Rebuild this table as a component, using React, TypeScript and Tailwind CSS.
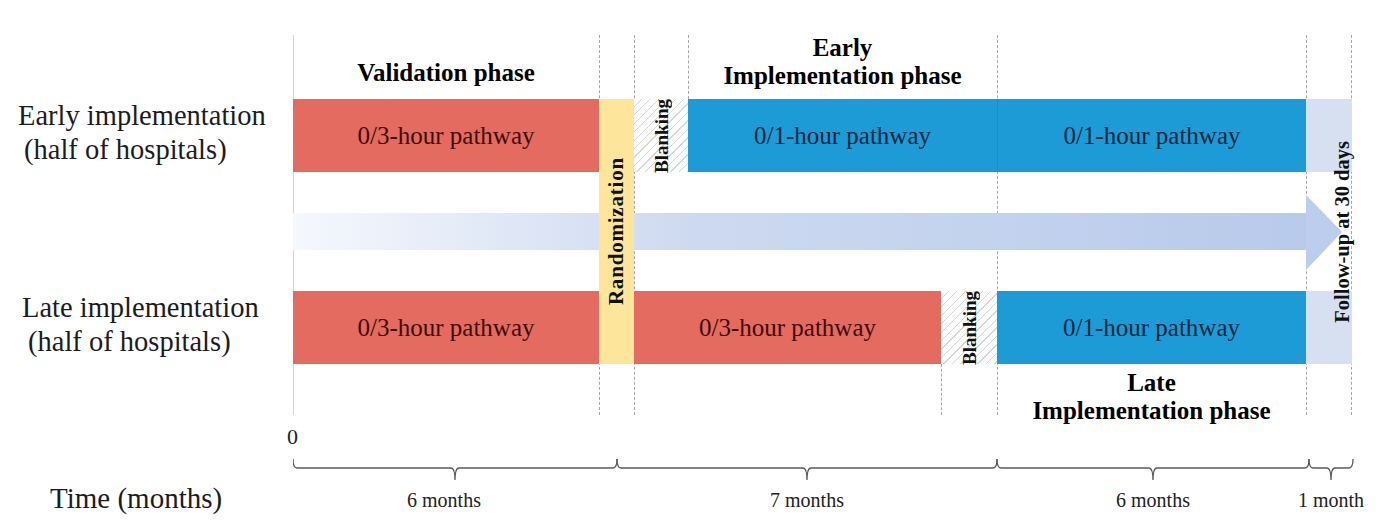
import React from "react";

// Timeline of the stepped-wedge study: two hospital groups, four periods.
const dashed = "border-dashed border-[#a3a8ae]";
const hatch =
  "bg-[repeating-linear-gradient(135deg,#ffffff_0px,#ffffff_5px,#d5d5d5_5px,#d5d5d5_6px)]";
const upright = "[writing-mode:vertical-rl] rotate-180 whitespace-nowrap";

const Bar = ({ className, tone, label }: { className: string; tone: "red" | "blue"; label: string }) => (
  <div
    className={`${className} flex items-center justify-center text-[25px] leading-none whitespace-nowrap ${
      tone === "red" ? "bg-[#e36b5f] text-[#3f0a0a]" : "bg-[#1c9bd6] text-[#0a263d]"
    }`}
  >
    {label}
  </div>
);

const Blanking = ({ className }: { className: string }) => (
  <div className={`${className} ${hatch} flex items-center justify-center`}>
    <span className={`${upright} text-[19px] font-bold leading-none text-[#111]`}>Blanking</span>
  </div>
);

const GroupLabel = ({ first, second, pad }: { first: string; second: string; pad: [string, string] }) => (
  <div className="flex flex-col justify-center text-[28.5px] leading-[34px] text-[#1c1c1c] whitespace-nowrap">
    <span className={pad[0]}>{first}</span>
    <span className={pad[1]}>{second}</span>
  </div>
);

// horizontal curly braces under the timeline, x in px from month 0
const braces: [number, number][] = [
  [0, 324],
  [324, 704],
  [704, 1016],
  [1016, 1060],
];

const bracePath = ([a, b]: [number, number]) => {
  const m = (a + b) / 2;
  return `M${a},4 Q${a},13 ${a + 4},13 L${m - 4},13 Q${m},13 ${m},25 Q${m},13 ${m + 4},13 L${b - 4},13 Q${b},13 ${b},4`;
};

export default function App() {
  return (
    <div className="w-[1384px] h-[526px] overflow-hidden bg-white font-['Liberation_Serif',serif] text-black">
      <div className="pt-[35px]">
        <div className="grid grid-cols-[293px_306px_35px_54px_253px_56px_309px_46px] grid-rows-[64px_73px_119px_73px_51px]">
          {/* guide lines */}
          <div className="col-start-2 row-start-1 row-end-6 border-l border-[#d4d4d4]" />
          <div className={`col-start-3 row-start-1 row-end-6 border-l ${dashed}`} />
          <div className={`col-start-4 row-start-1 row-end-6 border-l ${dashed}`} />
          <div className={`col-start-5 row-start-1 border-l ${dashed}`} />
          <div className={`col-start-6 row-start-5 border-l ${dashed}`} />
          <div className={`col-start-7 row-start-1 row-end-6 border-l ${dashed}`} />
          <div className={`col-start-8 row-start-1 row-end-6 border-x ${dashed}`} />

          {/* phase headings */}
          <div className="col-start-2 row-start-1 flex items-end justify-center pb-[12px] text-[25px] font-bold leading-[28px]">
            Validation phase
          </div>
          <div className="col-start-5 col-end-7 row-start-1 flex flex-col items-center justify-end pb-[9px] text-[25px] font-bold leading-[28px] whitespace-nowrap">
            <span>Early</span>
            <span>Implementation phase</span>
          </div>

          {/* early group */}
          <div className="col-start-1 row-start-2">
            <GroupLabel first="Early implementation" second="(half of hospitals)" pad={["pl-[18px]", "pl-[24px]"]} />
          </div>
          <Bar className="col-start-2 row-start-2" tone="red" label="0/3-hour pathway" />
          <Blanking className="col-start-4 row-start-2" />
          <Bar className="col-start-5 col-end-7 row-start-2" tone="blue" label="0/1-hour pathway" />
          <Bar className="col-start-7 row-start-2 border-l border-[#1791ca]" tone="blue" label="0/1-hour pathway" />
          <div className="col-start-8 row-start-2 bg-[#d6e0f1]" />

          {/* time arrow */}
          <div className="col-start-2 col-end-9 row-start-3">
            <svg width="1059" height="119" viewBox="0 0 1059 119">
              <defs>
                <linearGradient id="timeArrow" x1="0" x2="1" y1="0" y2="0">
                  <stop offset="0" stopColor="#f5f8fd" />
                  <stop offset="0.4" stopColor="#cdd9f0" />
                  <stop offset="1" stopColor="#b8caeb" />
                </linearGradient>
              </defs>
              <rect x="0" y="41" width="1013" height="37" fill="url(#timeArrow)" />
              <polygon points="1013,23 1049,60 1013,98" fill="#bccdee" />
            </svg>
          </div>

          {/* late group */}
          <div className="col-start-1 row-start-4">
            <GroupLabel first="Late implementation" second="(half of hospitals)" pad={["pl-[22px]", "pl-[28px]"]} />
          </div>
          <Bar className="col-start-2 row-start-4" tone="red" label="0/3-hour pathway" />
          <Bar className="col-start-4 col-end-6 row-start-4" tone="red" label="0/3-hour pathway" />
          <Blanking className="col-start-6 row-start-4" />
          <Bar className="col-start-7 row-start-4" tone="blue" label="0/1-hour pathway" />
          <div className="col-start-8 row-start-4 bg-[#d6e0f1]" />

          {/* randomization and follow-up columns */}
          <div className="col-start-3 row-start-2 row-end-5 flex items-center justify-center bg-[#fde59c]">
            <span className={`${upright} text-[21px] font-bold leading-none tracking-[0.8px] text-[#111]`}>
              Randomization
            </span>
          </div>
          <div className="col-start-8 row-start-2 row-end-5 flex items-center justify-end">
            <span className={`${upright} text-[20.5px] font-bold leading-none text-[#111]`}>Follow-up at 30 days</span>
          </div>

          <div className="col-start-7 row-start-5 flex flex-col items-center self-start pt-[5px] text-[25px] font-bold leading-[28px] whitespace-nowrap">
            <span>Late</span>
            <span>Implementation phase</span>
          </div>
        </div>

        {/* time axis */}
        <div className="mt-[10px] pl-[287px] text-[22px] leading-[24px] text-[#222]">0</div>
        <div className="mt-[6px] pl-[293px]">
          <svg width="1062" height="30" viewBox="0 0 1062 30" className="block">
            {braces.map((b) => (
              <path key={b[0]} d={bracePath(b)} fill="none" stroke="#5a5a5a" strokeWidth="1.3" />
            ))}
          </svg>
        </div>
        <div className="flex items-start">
          <div className="w-[293px] pl-[50px] text-[29px] leading-[26px] text-[#1c1c1c]">Time (months)</div>
          {[
            ["w-[324px]", "6 months", "pr-[22px]"],
            ["w-[380px]", "7 months", ""],
            ["w-[312px]", "6 months", ""],
            ["w-[44px]", "1 month", ""],
          ].map(([w, t, p]) => (
            <div key={w} className={`${w} ${p} flex justify-center pt-[3px] text-[20px] leading-[24px] whitespace-nowrap text-[#222]`}>
              {t}
            </div>
          ))}
        </div>
      </div>
    </div>
  );
}
